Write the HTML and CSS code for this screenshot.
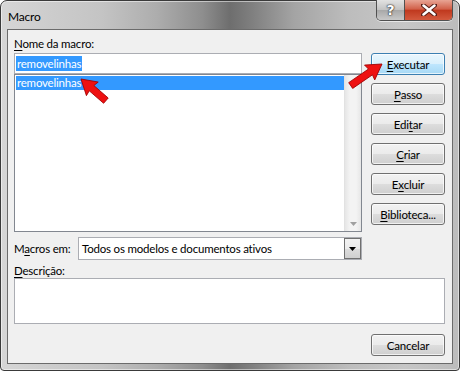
FILE: index.html
```html
<!DOCTYPE html>
<html lang="pt">
<head>
  <meta charset="UTF-8" />
  <title>Macro</title>
  <link rel="stylesheet" href="styles.css">
</head>
<body>
  <div class="window">
    <div class="titlebar">
      <span class="title">Macro</span>
      <div class="caption-btns">
        <div class="cap-help">?</div>
        <div class="cap-close">
          <svg width="16" height="12" viewBox="0 0 16 12">
            <path d="M2 1 L14 11 M14 1 L2 11" stroke="#5a2018" stroke-width="4.5" stroke-linecap="round"/>
            <path d="M2.5 1.5 L13.5 10.5 M13.5 1.5 L2.5 10.5" stroke="#fff" stroke-width="2.5" stroke-linecap="round"/>
          </svg>
        </div>
      </div>
    </div>

    <div class="client">
      <div class="main">
        <div class="left">
          <div class="label first"><u>N</u>ome da macro:</div>
          <div class="input"><span class="sel">removelinhas</span></div>
          <div class="list">
            <div class="items">
              <div class="item active">removelinhas</div>
            </div>
            <div class="vscroll">
              <svg width="7" height="4" viewBox="0 0 7 4"><path d="M0 0 H7 L3.5 4 Z" fill="#a0a0a0"/></svg>
            </div>
          </div>
          <div class="macros-row">
            <span class="row-label">M<u>a</u>cros em:</span>
            <div class="select">
              <span class="select-text">Todos os modelos e documentos ativos</span>
              <div class="drop">
                <svg width="7" height="4" viewBox="0 0 7 4"><path d="M0 0 H7 L3.5 4 Z" fill="#000"/></svg>
              </div>
            </div>
          </div>
        </div>

        <div class="buttons">
          <div class="btn default"><u>E</u>xecutar</div>
          <div class="btn"><u>P</u>asso</div>
          <div class="btn">Edi<u>t</u>ar</div>
          <div class="btn"><u>C</u>riar</div>
          <div class="btn">E<u>x</u>cluir</div>
          <div class="btn"><u>B</u>iblioteca...</div>
        </div>
      </div>

      <div class="label desc"><u>D</u>escrição:</div>
      <div class="textarea"></div>

      <div class="footer">
        <div class="btn">Cancelar</div>
      </div>
    </div>

    <svg class="arrows" width="460" height="371" viewBox="0 0 460 371">
      <g transform="translate(81 79) rotate(221)">
        <polygon points="0,0 -15,-9 -14,-3.5 -33,-3.5 -33,3.5 -14,3.5 -15,9" fill="#ee1111" stroke="#a00000" stroke-width="0.8" stroke-linejoin="round"/>
      </g>
      <g transform="translate(382 64) rotate(-34.5)">
        <polygon points="0,0 -15,-9 -14,-3.5 -38,-3.5 -38,3.5 -14,3.5 -15,9" fill="#ee1111" stroke="#a00000" stroke-width="0.8" stroke-linejoin="round"/>
      </g>
    </svg>
  </div>
</body>
</html>
```

FILE: styles.css
```css
body {
  margin: 0;
  padding: 0;
  background: #fff;
  font-family: Lato, "Noto Sans", sans-serif;
  font-size: 11.5px;
  letter-spacing: -0.2px;
  color: #000;
}
u {
  text-decoration: underline;
  text-underline-offset: 2px;
}
.window {
  position: relative;
  width: 460px;
  height: 371px;
  box-sizing: border-box;
  border: 1px solid #3a3a3a;
  border-radius: 7px 7px 4px 4px;
  padding: 0 6px 6px;
  background: linear-gradient(90deg, #d6d6d6 0%, #cdcdcd 10%, #c4c4c4 22%, #adadad 34%, #8e8e8e 44%, #6e6e6e 50%, #808080 55%, #a4a4a4 64%, #bdbdbd 76%, #c6c6c6 88%, #bcbcbc 100%);
  box-shadow: inset 0 0 0 1px rgba(255,255,255,0.5);
}
.titlebar {
  height: 28px;
  display: flex;
  align-items: flex-start;
}
.title {
  margin: 8px 0 0 1px;
  font-size: 12px;
  line-height: 15px;
}
.caption-btns {
  margin-left: auto;
  margin-top: -1px;
  display: flex;
  height: 20px;
  border: 1px solid #505050;
  border-top: none;
  border-radius: 0 0 5px 5px;
  overflow: hidden;
  box-shadow: 0 1px 0 rgba(255,255,255,0.6);
}
.cap-help {
  width: 27px;
  display: flex;
  align-items: center;
  justify-content: center;
  border-right: 1px solid #505050;
  background: linear-gradient(#e2e2e2, #c2c2c2 50%, #a8a8a8 51%, #c8c8c8);
  color: #fff;
  font-family: "DejaVu Sans", sans-serif;
  font-weight: bold;
  font-size: 14px;
  text-shadow: 0 0 1px #333, 0 0 1px #333, 0 0 2px #333;
}
.cap-close {
  width: 47px;
  display: flex;
  align-items: center;
  justify-content: center;
  background: linear-gradient(#e8a494, #d1614a 45%, #c0391f 52%, #d35a3e);
}
.client {
  height: 335px;
  box-sizing: border-box;
  border: 1px solid #6b6b6b;
  background: #f0f0f0;
  padding: 0 7px 0 6px;
}
.main {
  display: flex;
  gap: 9px;
}
.left {
  width: 348px;
}
.label {
  line-height: 15px;
  height: 15px;
}
.label.first {
  padding-top: 6px;
  margin-bottom: 2px;
}
.input {
  height: 21px;
  box-sizing: border-box;
  border: 1px solid #abadb3;
  background: #fff;
  padding: 2px 1px;
  line-height: 15px;
}
.sel {
  background: #3399ff;
  color: #fff;
  padding: 1px;
}
.list {
  height: 158px;
  box-sizing: border-box;
  border: 1px solid #828790;
  background: #fff;
  display: flex;
}
.items {
  flex: 1;
  padding-top: 1px;
  padding-left: 1px;
}
.item {
  height: 14px;
  line-height: 14px;
  padding-left: 1px;
}
.item.active {
  background: #3399ff;
  color: #fff;
}
.vscroll {
  width: 17px;
  background: linear-gradient(90deg, #e6e6e6, #f3f3f3 30%, #f3f3f3 70%, #e6e6e6);
  border-left: 1px solid #e2e2e2;
  display: flex;
  align-items: flex-end;
  justify-content: center;
  padding-bottom: 5px;
  box-sizing: border-box;
}
.macros-row {
  margin-top: 5px;
  display: flex;
  align-items: center;
}
.row-label {
  width: 64px;
  white-space: nowrap;
}
.select {
  flex: 1;
  height: 23px;
  box-sizing: border-box;
  border: 1px solid #abadb3;
  background: #fff;
  display: flex;
  align-items: center;
}
.select-text {
  flex: 1;
  padding-left: 3px;
  white-space: nowrap;
}
.drop {
  width: 17px;
  height: 21px;
  box-sizing: border-box;
  border: 1px solid #707070;
  background: linear-gradient(#f2f2f2, #ebebeb 50%, #dddddd 51%, #cfcfcf);
  display: flex;
  align-items: center;
  justify-content: center;
}
.buttons {
  width: 74px;
  padding-top: 23px;
  display: flex;
  flex-direction: column;
  gap: 8px;
}
.btn {
  height: 22px;
  box-sizing: border-box;
  border: 1px solid #707070;
  border-radius: 3px;
  background: linear-gradient(#f2f2f2, #ebebeb 50%, #dddddd 51%, #cfcfcf);
  box-shadow: inset 0 0 0 1px rgba(255,255,255,0.7);
  display: flex;
  align-items: center;
  justify-content: center;
  line-height: 15px;
  white-space: nowrap;
}
.btn.default {
  border-color: #3c7fb1;
  background: linear-gradient(#eaf6fd, #d9f0fc 50%, #bee6fd 51%, #a7d9f5);
}
.label.desc {
  margin-top: 3px;
}
.textarea {
  height: 46px;
  box-sizing: border-box;
  border: 1px solid #abadb3;
  background: #fff;
}
.footer {
  margin-top: 10px;
  display: flex;
  justify-content: flex-end;
}
.footer .btn {
  width: 74px;
}
.arrows {
  position: absolute;
  left: -1px;
  top: -1px;
  pointer-events: none;
}
```
